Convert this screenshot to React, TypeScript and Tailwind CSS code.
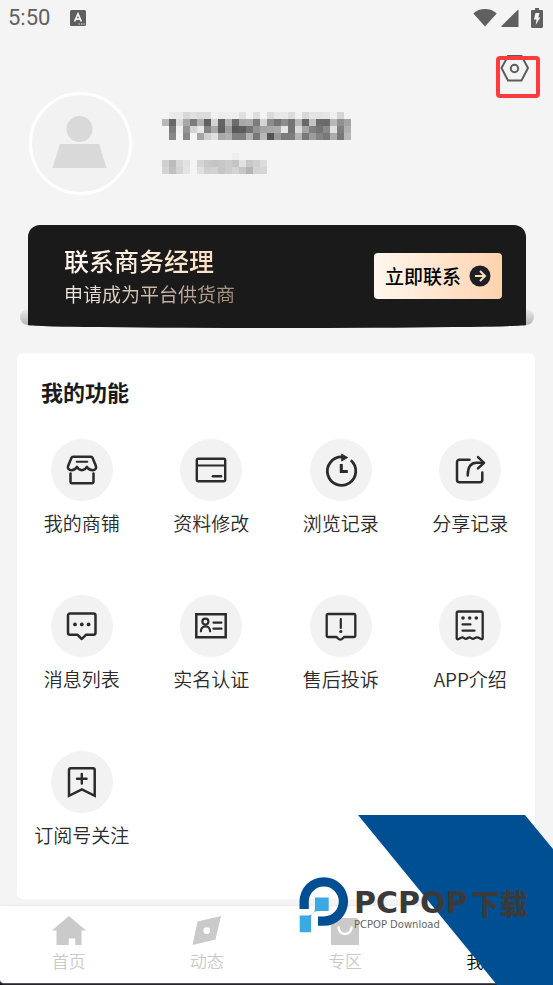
import React from 'react';

// Grey level of every block, two hex digits each
const PHONE_BLOCKS = [
  'f4eaead8e0dcdcf1eceeeee0f2ddf4dae8e8dcf1d8e4e4e6f0d5f2',
  'b868dca87cb060d464b46ca8ac7cd48c748c74b868c46c6ab890a4',
  'f47cf094d4e884a8609c585c7494a4a8ace474dca480748ae080b0',
  'f488f488f4a4d0e0a8b08080b478b854987c7cb4789c8478ac78b8',
];

const NAME_BLOCKS = [
  'f4f4f4f4f4f4f4f4f4f4eef4f4f4f4',
  'd0bcd8e2f4d4c8c4c8ccc4e2c8d0dc',
  'd4c0d4e4f4e0d0d2c6ccd4c6b4d4d6',
];

const Mosaic = ({ rows }: { rows: string[] }) => {
  const cols = rows[0].length / 2;
  return (
    <svg width={cols * 7} height={rows.length * 7} shapeRendering="crispEdges" aria-hidden="true">
      {rows.map((row, y) =>
        (row.match(/../g) || []).map((v, x) => (
          <rect key={`${x}-${y}`} x={x * 7} y={y * 7} width="7" height="7" fill={`#${v}${v}${v}`} />
        ))
      )}
    </svg>
  );
};

const features = [
  {
    label: '我的商铺',
    icon: (
      <>
        <path d="M7 2.7h18c.8 0 1.2.3 1.5 1l3.4 8.300c.9 2.500-.9 4.200-3 4.200-2.400 0-4.700-1-6-3.400-1.200 2.400-2.800 3.400-5 3.400s-3.800-1-5-3.400c-1.300 2.400-3.300 3.400-5.600 3.400-2.400 0-4-1.700-3.200-4.200L5.500 3.700c.3-.7.7-1 1.500-1z" />
        <path d="M10.700 7.700h10.600" strokeWidth="2" />
        <path d="M4.500 19.500v8.600c0 .8.4 1.200 1.200 1.200h20.600c.8 0 1.200-.4 1.200-1.200v-8.600" />
      </>
    ),
  },
  {
    label: '资料修改',
    icon: (
      <>
        <rect x="1.8" y="4.8" width="28.4" height="22.4" rx="1.5" strokeWidth="2.4" />
        <path d="M2.500 11.500h27" strokeWidth="1.8" />
        <path d="M18 22.300h8" strokeWidth="2.6" />
      </>
    ),
  },
  {
    label: '浏览记录',
    icon: (
      <>
        <path d="M25.800 6.300A14.200 14.200 0 1 1 17 2.900" strokeWidth="2.8" strokeLinecap="butt" />
        <path d="M17 .4l5.600 3.100L17 6.700z" fill="#2b2b2b" strokeWidth="1" />
        <path d="M16.300 10v7.600h6.500" strokeWidth="3" strokeLinecap="butt" strokeLinejoin="miter" />
      </>
    ),
  },
  {
    label: '分享记录',
    icon: (
      <>
        <path d="M15.500 5.700H5.500A2.500 2.500 0 0 0 3 8.200v17.600a2.500 2.500 0 0 0 2.500 2.500h20.300a2.500 2.500 0 0 0 2.500-2.500V18.500" />
        <path d="M13.700 21.500c0-8.500 3-12.700 9-12.700h7" />
        <path d="M24 3.200l6 5.600-6 5.600" />
      </>
    ),
  },
  {
    label: '消息列表',
    icon: (
      <>
        <path d="M4 3.500h23.500a2 2 0 0 1 2 2v17.300a2 2 0 0 1-2 2h-7.600L15.800 29l-4.200-4.200H4a2 2 0 0 1-2-2V5.500a2 2 0 0 1 2-2z" />
        <g fill="#2b2b2b" stroke="none">
          <circle cx="9" cy="14.4" r="1.9" />
          <circle cx="15.8" cy="14.4" r="1.9" />
          <circle cx="22.6" cy="14.4" r="1.9" />
        </g>
      </>
    ),
  },
  {
    label: '实名认证',
    icon: (
      <>
        <path d="M1.300 4.200h29.400v23H1.300z" strokeLinejoin="miter" />
        <circle cx="10.4" cy="11.6" r="3" strokeWidth="2.2" />
        <path d="M5.900 21.300c0-3 1.900-5 4.600-5s4.600 2 4.600 5M18.500 12.600h8M18.500 18.700h8" strokeWidth="2.2" />
      </>
    ),
  },
  {
    label: '售后投诉',
    icon: (
      <>
        <path d="M3 4h26a1.300 1.300 0 0 1 1.300 1.300v20.400A1.300 1.300 0 0 1 29 27h-9.500c-1.200 0-2 2.700-4.200 2.700S12.300 27 11.100 27H3a1.300 1.300 0 0 1-1.300-1.300V5.300A1.300 1.300 0 0 1 3 4z" strokeWidth="2.3" />
        <path d="M15.800 9v9" strokeWidth="2.2" />
        <circle cx="15.8" cy="21.5" r="1.6" fill="#2b2b2b" stroke="none" />
      </>
    ),
  },
  {
    label: 'APP介绍',
    icon: (
      <>
        <path d="M4.500 1.500h22.400c1 0 1.800.7 1.800 1.800v24.900c0 1-.9 1.200-1.800.7-1.500-.8-2.700-1.500-4-1.500-2 0-2.600 1.400-4 1.400s-2-1.400-3.400-1.400-2 1.400-3.600 1.400-2-1.400-3.600-1.400c-1.200 0-2.300.9-3.600 1.600-1 .5-2 .2-2-.8V3.300c0-1.100.8-1.800 1.800-1.800z" strokeWidth="2.3" />
        <g fill="#2b2b2b" stroke="none">
          <circle cx="9" cy="8" r="1.8" />
          <circle cx="15.7" cy="8" r="1.8" />
          <circle cx="22.3" cy="8" r="1.8" />
        </g>
        <path d="M8.500 14.400h8M8.500 20.700h12" strokeWidth="2.2" />
      </>
    ),
  },
  {
    label: '订阅号关注',
    icon: (
      <>
        <path d="M4.800 2.200h22.100c1.100 0 1.800.7 1.800 1.800v25.800l-12.800-6.300L3 29.800V4c0-1.100.7-1.800 1.800-1.800z" strokeLinejoin="miter" />
        <path d="M15.800 8v9.600M11 12.800h9.600" strokeWidth="2.4" />
      </>
    ),
  },
];

const tabs = [
  {
    label: '首页',
    icon: <path d="M17 0L34 14.500h-4.500V29h-6.200v-5.600c0-.6-.4-1-1-1h-4.600c-.6 0-1 .4-1 1V29H4.500V14.500H0z" />,
  },
  {
    label: '动态',
    icon: <path fillRule="evenodd" d="M7.500 5.500L31 0l-5.500 23.500L2.500 29zM16.700 11.200a3.400 3.400 0 1 0 0 6.800 3.400 3.400 0 0 0 0-6.800z" />,
  },
  {
    label: '专区',
    icon: (
      <>
        <path d="M5 2h24l2 3v24H3V5z" />
        <path d="M10.500 11.500c.5 4 3.200 6.500 6.500 6.500s6-2.500 6.500-6.500" fill="none" stroke="#fff" strokeWidth="2.6" strokeLinecap="round" />
      </>
    ),
  },
  {
    label: '我的',
    active: true,
    icon: <path d="M17 1a7 7 0 1 1 0 14 7 7 0 0 1 0-14zM8 17h18l5 12H3z" />,
  },
];

const StatusBar = () => (
  <div className="flex h-9 items-center justify-between pl-2 pr-[9px] text-[#5f5f5f]">
    <div className="flex items-center gap-5">
      <span className="font-[Roboto] text-[22px] leading-9">5:50</span>
      <svg width="16" height="16" viewBox="0 0 16 16" aria-hidden="true">
        <rect width="16" height="16" rx="1.5" fill="#5f5f5f" />
        <path d="M4.600 11.500L8 3.800l3.400 7.700M5.800 9.200h4.400" fill="none" stroke="#f4f4f4" strokeWidth="1.7" />
        <path d="M8.500 14h1.300M11 14h1.300M13.400 14h1.300" stroke="#f4f4f4" strokeWidth="1.2" />
      </svg>
    </div>
    <div className="flex items-center pb-px pr-px" aria-hidden="true">
      <svg width="24" height="20" viewBox="0 0 24 20" fill="#5f5f5f">
        <path d="M12 18.500L.3 5.400C3.500 2.500 7.500 1 12 1s8.500 1.500 11.700 4.400z" />
      </svg>
      <svg className="ml-1" width="18" height="20" viewBox="0 0 18 20" fill="#5f5f5f">
        <path d="M17.500 2.200V19H.8c-.5 0-.7-.5-.3-.9L16.700 1.900c.4-.3.8-.2.8.3z" />
      </svg>
      <svg className="ml-3" width="12" height="20" viewBox="0 0 12 20">
        <path d="M4 0h4v2h2.800c.7 0 1.200.5 1.200 1.200v15.600c0 .7-.5 1.200-1.200 1.200H1.200C.5 20 0 19.500 0 18.800V3.200C0 2.500.5 2 1.200 2H4z" fill="#5f5f5f" />
        <path d="M4.500 5h4L7.300 9.500h2L4.700 17l.8-5.500H3z" fill="#f4f4f4" />
      </svg>
    </div>
  </div>
);

const Watermark = () => (
  <div className="pointer-events-none absolute bottom-0 right-0 h-[170px] w-[254px]">
    <svg className="absolute bottom-0 right-0" width="195" height="170" viewBox="0 0 195 170" aria-hidden="true">
      <path d="M0 0h167l28 34v136h-56z" fill="#004f92" />
    </svg>
    <div className="absolute left-0 top-[62px] flex items-start">
      <svg width="50" height="56" viewBox="0 0 50 56" aria-hidden="true">
        <path d="M.5 32v-7.500a24.300 24.300 0 1 1 24.300 24.300H19v-9.300h5.800a15 15 0 1 0-15-15V32z" fill="#004f92" />
        <path d="M16 20.500h13.700V34h-9.500c-5.400 0-8.200 2-8.200 7.500v13.700H.7V38.500h5.600c6.200 0 9.700-1.700 9.700-8z" fill="#3ba9e4" />
      </svg>
      <div className="ml-[5px] mt-[10px] whitespace-nowrap">
        <p className="flex gap-1 font-bold leading-8 text-[#3a3a3a]">
          <span className="font-['DejaVu_Sans',sans-serif] text-[30px] leading-8">PCPOP</span>
          <span className="font-['Noto_Sans_CJK_SC',sans-serif] text-[28px] font-black leading-8">下载</span>
        </p>
        <p className="font-['DejaVu_Sans',sans-serif] text-[10px] leading-3 text-[#666]">PCPOP Download</p>
      </div>
    </div>
  </div>
);

export default function App() {
  return (
    <div className="relative flex min-h-screen flex-col overflow-hidden bg-[#f4f4f4] font-['Noto_Sans_CJK_SC',sans-serif] text-[#2b2b2b]">
      <StatusBar />

      {/* Settings */}
      <div className="mt-[18px] flex justify-end pr-[23px]">
        <button type="button" aria-label="设置" className="relative h-7 w-[30px]">
          <svg width="30" height="28" viewBox="0 0 30 28" fill="none" stroke="#5c5c5c" strokeWidth="2">
            <path d="M8 2h13.500L28 14l-6.500 12.500H8L1.500 14z" />
            <circle cx="14.5" cy="14.5" r="3.7" />
          </svg>
          <span className="absolute -left-1 top-[2px] h-[42px] w-11 rounded-[4px] border-4 border-[#ff3b3b]" />
        </button>
      </div>

      {/* Profile */}
      <div className="mt-[10px] flex pl-[29px]">
        <div className="h-[103px] w-[103px] rounded-full border-[3px] border-white bg-[#f2f2f2]">
          <svg width="97" height="97" viewBox="0 0 97 97" fill="#d9d9d9" aria-hidden="true">
            <circle cx="47.5" cy="34" r="13" />
            <path d="M28 49h39l7.500 24h-54z" />
          </svg>
        </div>
        <div className="ml-[30px] flex flex-col gap-[13px] pt-5">
          <Mosaic rows={PHONE_BLOCKS} />
          <Mosaic rows={NAME_BLOCKS} />
        </div>
      </div>

      {/* Supplier banner */}
      <section className="relative ml-5 mr-[19px] mt-[30px] px-2">
        <div className="absolute inset-x-0 bottom-[3px] h-4 rounded-lg bg-linear-to-b from-[#ececec] to-[#b4b4b4]" />
        <div className="relative flex h-[103px] items-center justify-between rounded-[12px_12px_50%_50%/12px_12px_3px_3px] bg-[#1a1a1a] pb-px pl-9 pr-6">
          <div>
            <h2 className="w-fit bg-linear-to-r from-[#fff8f0] to-[#fddfc0] bg-clip-text text-[25px] font-medium leading-8 text-transparent">联系商务经理</h2>
            <p className="mt-1 w-fit bg-linear-to-r from-[#f3ece6] to-[#a58f7c] bg-clip-text text-[19px] leading-7 text-transparent">申请成为平台供货商</p>
          </div>
          <button type="button" className="flex h-[46px] w-32 items-center justify-center gap-2 rounded-[4px] bg-linear-to-r from-[#fff7ee] to-[#ffd3ae] text-[19px] font-medium text-black">
            立即联系
            <svg width="22" height="22" viewBox="0 0 22 22" aria-hidden="true">
              <circle cx="11" cy="11" r="10.5" fill="#1c2026" />
              <path d="M6 11h9.500M11 6l5 5-5 5" fill="none" stroke="#ffe0b5" strokeWidth="2" />
            </svg>
          </button>
        </div>
      </section>

      {/* Features */}
      <section className="ml-[17px] mr-[18px] mt-[25px] flex-1 rounded-md bg-white pb-[50px] pt-6">
        <h2 className="pl-6 text-[22px] font-bold leading-7 text-[#1a1a1a]">我的功能</h2>
        <div className="mt-[34px] grid grid-cols-4 gap-y-[58px]">
          {features.map((f) => (
            <button type="button" key={f.label} className="flex flex-col items-center gap-2">
              <span className="flex h-[62px] w-[62px] items-center justify-center rounded-full bg-[#f2f2f2]">
                <svg className="overflow-visible" width="32" height="32" viewBox="0 0 32 32" fill="none" stroke="#2b2b2b" strokeWidth="2.5" strokeLinecap="round" strokeLinejoin="round" aria-hidden="true">
                  {f.icon}
                </svg>
              </span>
              <span className="whitespace-nowrap text-[19px] font-[350] leading-7">{f.label}</span>
            </button>
          ))}
        </div>
      </section>

      {/* Tab bar */}
      <div className="mt-[7px] bg-[#0c0812] pb-[2px]">
        <nav className="grid h-[77px] grid-cols-4 rounded-b-[4px] bg-white shadow-[0_0_3px_#dddddd]">
          {tabs.map((t) => (
            <a key={t.label} href="#" className={`flex flex-col items-center pr-px pt-[10px] ${t.active ? 'text-black' : 'text-[#cacaca]'}`}>
              <svg width="34" height="30" viewBox="0 0 34 30" fill="currentColor" aria-hidden="true">
                {t.icon}
              </svg>
              <span className="mt-[3px] text-[17px] font-[350] leading-6">{t.label}</span>
            </a>
          ))}
        </nav>
      </div>

      <Watermark />
    </div>
  );
}
